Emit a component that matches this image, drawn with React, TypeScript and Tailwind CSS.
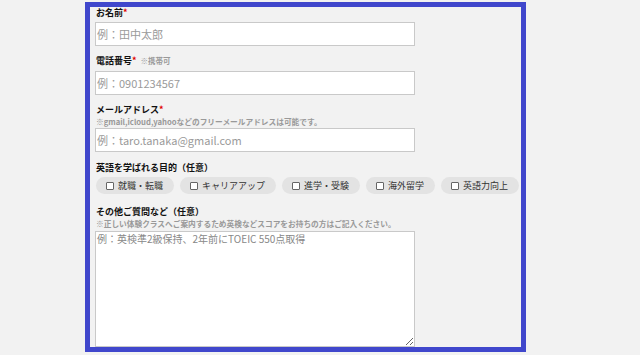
import React from "react";

const font = { fontFamily: '"Noto Sans CJK JP", "Noto Sans", sans-serif' };

function Label({ text, required, extra }: { text: string; required?: boolean; extra?: string }) {
  return (
    <div className="flex items-baseline text-[9px] leading-[12px] font-bold text-[#111] ml-[1px]">
      <span>{text}</span>
      {required && <span className="text-[#e00000]">*</span>}
      {extra && <span className="ml-[4px] text-[7.5px] font-bold text-[#999]">{extra}</span>}
    </div>
  );
}

function Note({ text }: { text: string }) {
  return <div className="text-[7.7px] leading-[10px] font-bold text-[#999] ml-[1px]">{text}</div>;
}

function TextInput({ placeholder }: { placeholder: string }) {
  return (
    <input
      type="text"
      placeholder={placeholder}
      className="block w-[320px] h-[24px] bg-white border border-[#c9c9c9] px-[1px] text-[11px] text-[#333] placeholder:text-[#9a9a9a] outline-none"
      style={font}
    />
  );
}

function Chip({ text }: { text: string }) {
  return (
    <div className="flex items-center h-[17px] rounded-full bg-[#e3e3e3] pl-[10px] pr-[11px] gap-[4px] text-[9px] text-[#333]">
      <span className="w-[8px] h-[8px] border border-[#666] bg-white rounded-[1px]" />
      <span className="leading-[12px]">{text}</span>
    </div>
  );
}

export default function App() {
  return (
    <div className="w-[640px] h-[355px] bg-[#f2f2f2] pt-[2px] overflow-hidden" style={font}>
      <div className="ml-[85px] w-[441px] h-[350px] border-[5px] border-[#4047cc] bg-[#f2f2f2] pl-[5px] overflow-hidden flex flex-col">
        <Label text="お名前" required />
        <div className="mt-[3px]">
          <TextInput placeholder="例：田中太郎" />
        </div>
        <div className="mt-[9px]">
          <Label text="電話番号" required extra="※携帯可" />
        </div>
        <div className="mt-[4px]">
          <TextInput placeholder="例：0901234567" />
        </div>
        <div className="mt-[9px]">
          <Label text="メールアドレス" required />
        </div>
        <div className="mt-[1px]">
          <Note text="※gmail,icloud,yahooなどのフリーメールアドレスは可能です。" />
        </div>
        <div className="mt-[1px]">
          <TextInput placeholder="例：taro.tanaka@gmail.com" />
        </div>
        <div className="mt-[10px]">
          <Label text="英語を学ばれる目的（任意）" />
        </div>
        <div className="mt-[3px] ml-[1px] flex gap-[6px]">
          <Chip text="就職・転職" />
          <Chip text="キャリアアップ" />
          <Chip text="進学・受験" />
          <Chip text="海外留学" />
          <Chip text="英語力向上" />
        </div>
        <div className="mt-[12px]">
          <Label text="その他ご質問など（任意）" />
        </div>
        <div className="mt-[1px]">
          <Note text="※正しい体験クラスへご案内するため英検などスコアをお持ちの方はご記入ください。" />
        </div>
        <textarea
          placeholder="例：英検準2級保持、2年前にTOEIC 550点取得"
          className="block mt-[2px] w-[320px] h-[116px] shrink-0 bg-white border border-[#c9c9c9] px-[1px] py-0 text-[10px] leading-[13px] text-[#333] placeholder:text-[#888] outline-none"
          style={font}
        />
      </div>
    </div>
  );
}
